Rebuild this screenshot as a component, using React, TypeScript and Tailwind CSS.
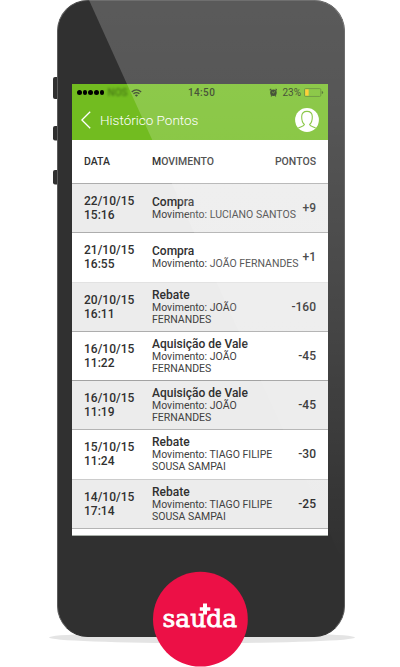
type Entry = {
  date: string;
  time: string;
  title: string;
  lines: string[];
  points: string;
  box: string;
};

const entries: Entry[] = [
  { date: "22/10/15", time: "15:16", title: "Compra", lines: ["Movimento: LUCIANO SANTOS"], points: "+9", box: "h-[49px] bg-[#ececec] border-[#adadad]" },
  { date: "21/10/15", time: "16:55", title: "Compra", lines: ["Movimento: JOÃO FERNANDES"], points: "+1", box: "h-[50px] pb-px bg-white border-[#e2e2e2]" },
  { date: "20/10/15", time: "16:11", title: "Rebate", lines: ["Movimento: JOÃO", "FERNANDES"], points: "-160", box: "h-[49px] bg-[#ececec] border-[#adadad]" },
  { date: "16/10/15", time: "11:22", title: "Aquisição de Vale", lines: ["Movimento: JOÃO", "FERNANDES"], points: "-45", box: "h-[49px] bg-white border-[#a2a2a2]" },
  { date: "16/10/15", time: "11:19", title: "Aquisição de Vale", lines: ["Movimento: JOÃO", "FERNANDES"], points: "-45", box: "h-[49px] bg-[#ececec] border-[#b4b4b4]" },
  { date: "15/10/15", time: "11:24", title: "Rebate", lines: ["Movimento: TIAGO FILIPE", "SOUSA SAMPAI"], points: "-30", box: "h-[50px] pb-px bg-white border-[#cccccc]" },
  { date: "14/10/15", time: "17:14", title: "Rebate", lines: ["Movimento: TIAGO FILIPE", "SOUSA SAMPAI"], points: "-25", box: "h-[49px] bg-[#ececec] border-[#b4b4b4]" },
];

function StatusBar() {
  return (
    <div className="flex h-[17px] items-center pl-[5px] pr-[4px] text-[#1c2b0c]">
      <div className="flex gap-[1.2px]">
        {[0, 1, 2, 3, 4].map((i) => (
          <span key={i} className="size-[4.5px] rounded-full bg-black" />
        ))}
      </div>
      <span className="ml-[3px] w-[21px] text-center text-[10px] leading-none font-medium text-[#3c6a12] opacity-80 blur-[1.2px]">
        NOS
      </span>
      <svg className="ml-[3px] h-[8px] w-[11px]" viewBox="0 0 11 8" fill="none" stroke="currentColor" strokeWidth="1.3">
        <path d="M.7 2.9Q5.5-1.2 10.3 2.9M2.5 4.8Q5.5 2.3 8.5 4.8" />
        <path d="M3.9 6.2Q5.5 4.9 7.1 6.2L5.5 7.8Z" fill="currentColor" stroke="none" />
      </svg>
      <span className="ml-[46px] w-[28px] text-[10px] leading-none font-medium tracking-[0.4px] whitespace-nowrap">14:50</span>
      <svg className="ml-[53px] h-[9px] w-[9px]" viewBox="0 0 9 9">
        <circle cx="4.5" cy="4.8" r="3.3" fill="currentColor" />
        <path d="M.8 2.2L2.3.8M8.2 2.2L6.7.8M2 8.4L2.8 7.4M7 8.4L6.2 7.4" stroke="currentColor" strokeWidth="1.1" />
        <path d="M4.5 4.9L6.2 3.3M4.5 4.9L3.2 4" stroke="#72bc20" strokeWidth=".7" />
      </svg>
      <span className="ml-[5px] w-[20px] text-[10px] leading-none whitespace-nowrap">23%</span>
      <svg className="ml-[2px] h-[9px] w-[20px]" viewBox="0 0 20 9">
        <rect x=".5" y=".5" width="16.5" height="8" rx="1.2" fill="none" stroke="#4a7a18" strokeWidth=".8" />
        <rect x="1.2" y="1.3" width="3.5" height="6.4" fill="#ffc40d" />
        <path d="M18 3V6Q19.4 5.6 19.4 4.5T18 3Z" fill="#35580f" />
      </svg>
    </div>
  );
}

function Header() {
  return (
    <div className="flex h-[39px] items-center pr-[9px] pb-[2px] pl-[9px]">
      <svg className="h-[18px] w-[10px]" viewBox="0 0 10 18" fill="none" stroke="#fff" strokeWidth="1.3">
        <path d="M9.2.7L.9 9L9.2 17.3" />
      </svg>
      <h1 className="ml-[9px] flex-1 text-[13.5px] leading-[18px] font-light whitespace-nowrap text-white">
        Histórico Pontos
      </h1>
      <svg className="size-[24px]" viewBox="0 0 24 24">
        <circle cx="12" cy="12" r="11.9" fill="#fff" />
        <path
          d="M3.3 20.2C5.2 18.6 9.2 18.5 9.4 16.5C7.4 14.8 6.6 12.4 6.7 8.5C6.8 5.1 9 3.4 12 3.4S17.2 5.1 17.3 8.5C17.4 12.4 16.6 14.8 14.6 16.5C14.8 18.5 18.8 18.6 20.7 20.2"
          fill="none"
          stroke="#72bc20"
          strokeWidth="1.1"
        />
      </svg>
    </div>
  );
}

function Row({ entry }: { entry: Entry }) {
  return (
    <div className={`flex shrink-0 items-center border-b pl-[12px] pr-[12px] ${entry.box}`}>
      <div className="w-[68px] shrink-0 text-[12px] leading-[14px] font-medium">
        <div>{entry.date}</div>
        <div>{entry.time}</div>
      </div>
      <div className="w-0 flex-1 whitespace-nowrap">
        <div className="text-[12px] leading-[13px] font-medium">{entry.title}</div>
        {entry.lines.map((line) => (
          <div key={line} className="text-[10.5px] leading-[12px] text-[#414141]">{line}</div>
        ))}
      </div>
      <div className="text-[12px] leading-[14px] font-medium">{entry.points}</div>
    </div>
  );
}

function Logo() {
  return (
    <svg className="absolute top-[571px] left-[152px] h-[96px] w-[96px]" viewBox="152 571 96 96">
      <circle cx="200.4" cy="619.2" r="47.4" fill="#ec1046" />
      <text
        x="162.5"
        y="627"
        fill="#fff"
        stroke="#fff"
        strokeWidth=".8"
        fontSize="25"
        textLength="74.5"
        lengthAdjust="spacingAndGlyphs"
        style={{ fontFamily: '"DejaVu Serif", serif' }}
      >
        sauda
      </text>
      <path d="M203 603.6H207V607.2H210.3V610.8H207V614.5H203V610.8H199.8V607.2H203Z" fill="#fff" />
    </svg>
  );
}

export default function App() {
  return (
    <div className="relative h-[667px] w-[400px] overflow-hidden bg-white font-['Roboto',sans-serif] text-[#303030]">
      <svg className="absolute inset-0" width="400" height="667" viewBox="0 0 400 667">
        <ellipse cx="202" cy="637.5" rx="153" ry="5.6" fill="#e4e4e4" />
        <g fill="#303030">
          <rect x="53" y="77" width="8" height="22" rx="2" />
          <rect x="53" y="126" width="8" height="14.5" rx="2" />
          <rect x="53" y="170" width="8" height="14.5" rx="2" />
        </g>
      </svg>
      <div className="relative ml-[56.5px] h-[636.5px] w-[288px] rounded-[31px] border border-[#5c5c5c] border-t-[#4a4a4a] border-b-[#303030] bg-[#303030] pt-[83px] pl-[14.5px]">
        <div className="flex h-[452px] w-[256px] flex-col overflow-hidden border-b border-[#a9b0a9] bg-white">
          <div className="h-[56px] shrink-0 bg-[#72bc20]">
            <StatusBar />
            <Header />
          </div>
          <div className="flex h-[44px] shrink-0 items-center border-b border-[#adadad] px-[12px] text-[10.5px] font-medium">
            <span className="w-[68px]">DATA</span>
            <span className="flex-1">MOVIMENTO</span>
            <span>PONTOS</span>
          </div>
          {entries.map((entry) => (
            <Row key={entry.date + entry.time} entry={entry} />
          ))}
        </div>
      </div>
      <svg className="absolute inset-0" width="400" height="667" viewBox="0 0 400 667">
        <defs>
          <linearGradient id="glare" gradientUnits="userSpaceOnUse" x1="0" y1="0" x2="0" y2="560">
            <stop offset="0" stopColor="#fff" stopOpacity=".205" />
            <stop offset=".2" stopColor="#fff" stopOpacity=".185" />
            <stop offset=".55" stopColor="#fff" stopOpacity=".11" />
            <stop offset="1" stopColor="#fff" stopOpacity="0" />
          </linearGradient>
        </defs>
        <path d="M89 0H313.5A31 31 0 0 1 344.5 31V560H342Z" fill="url(#glare)" />
      </svg>
      <Logo />
    </div>
  );
}
